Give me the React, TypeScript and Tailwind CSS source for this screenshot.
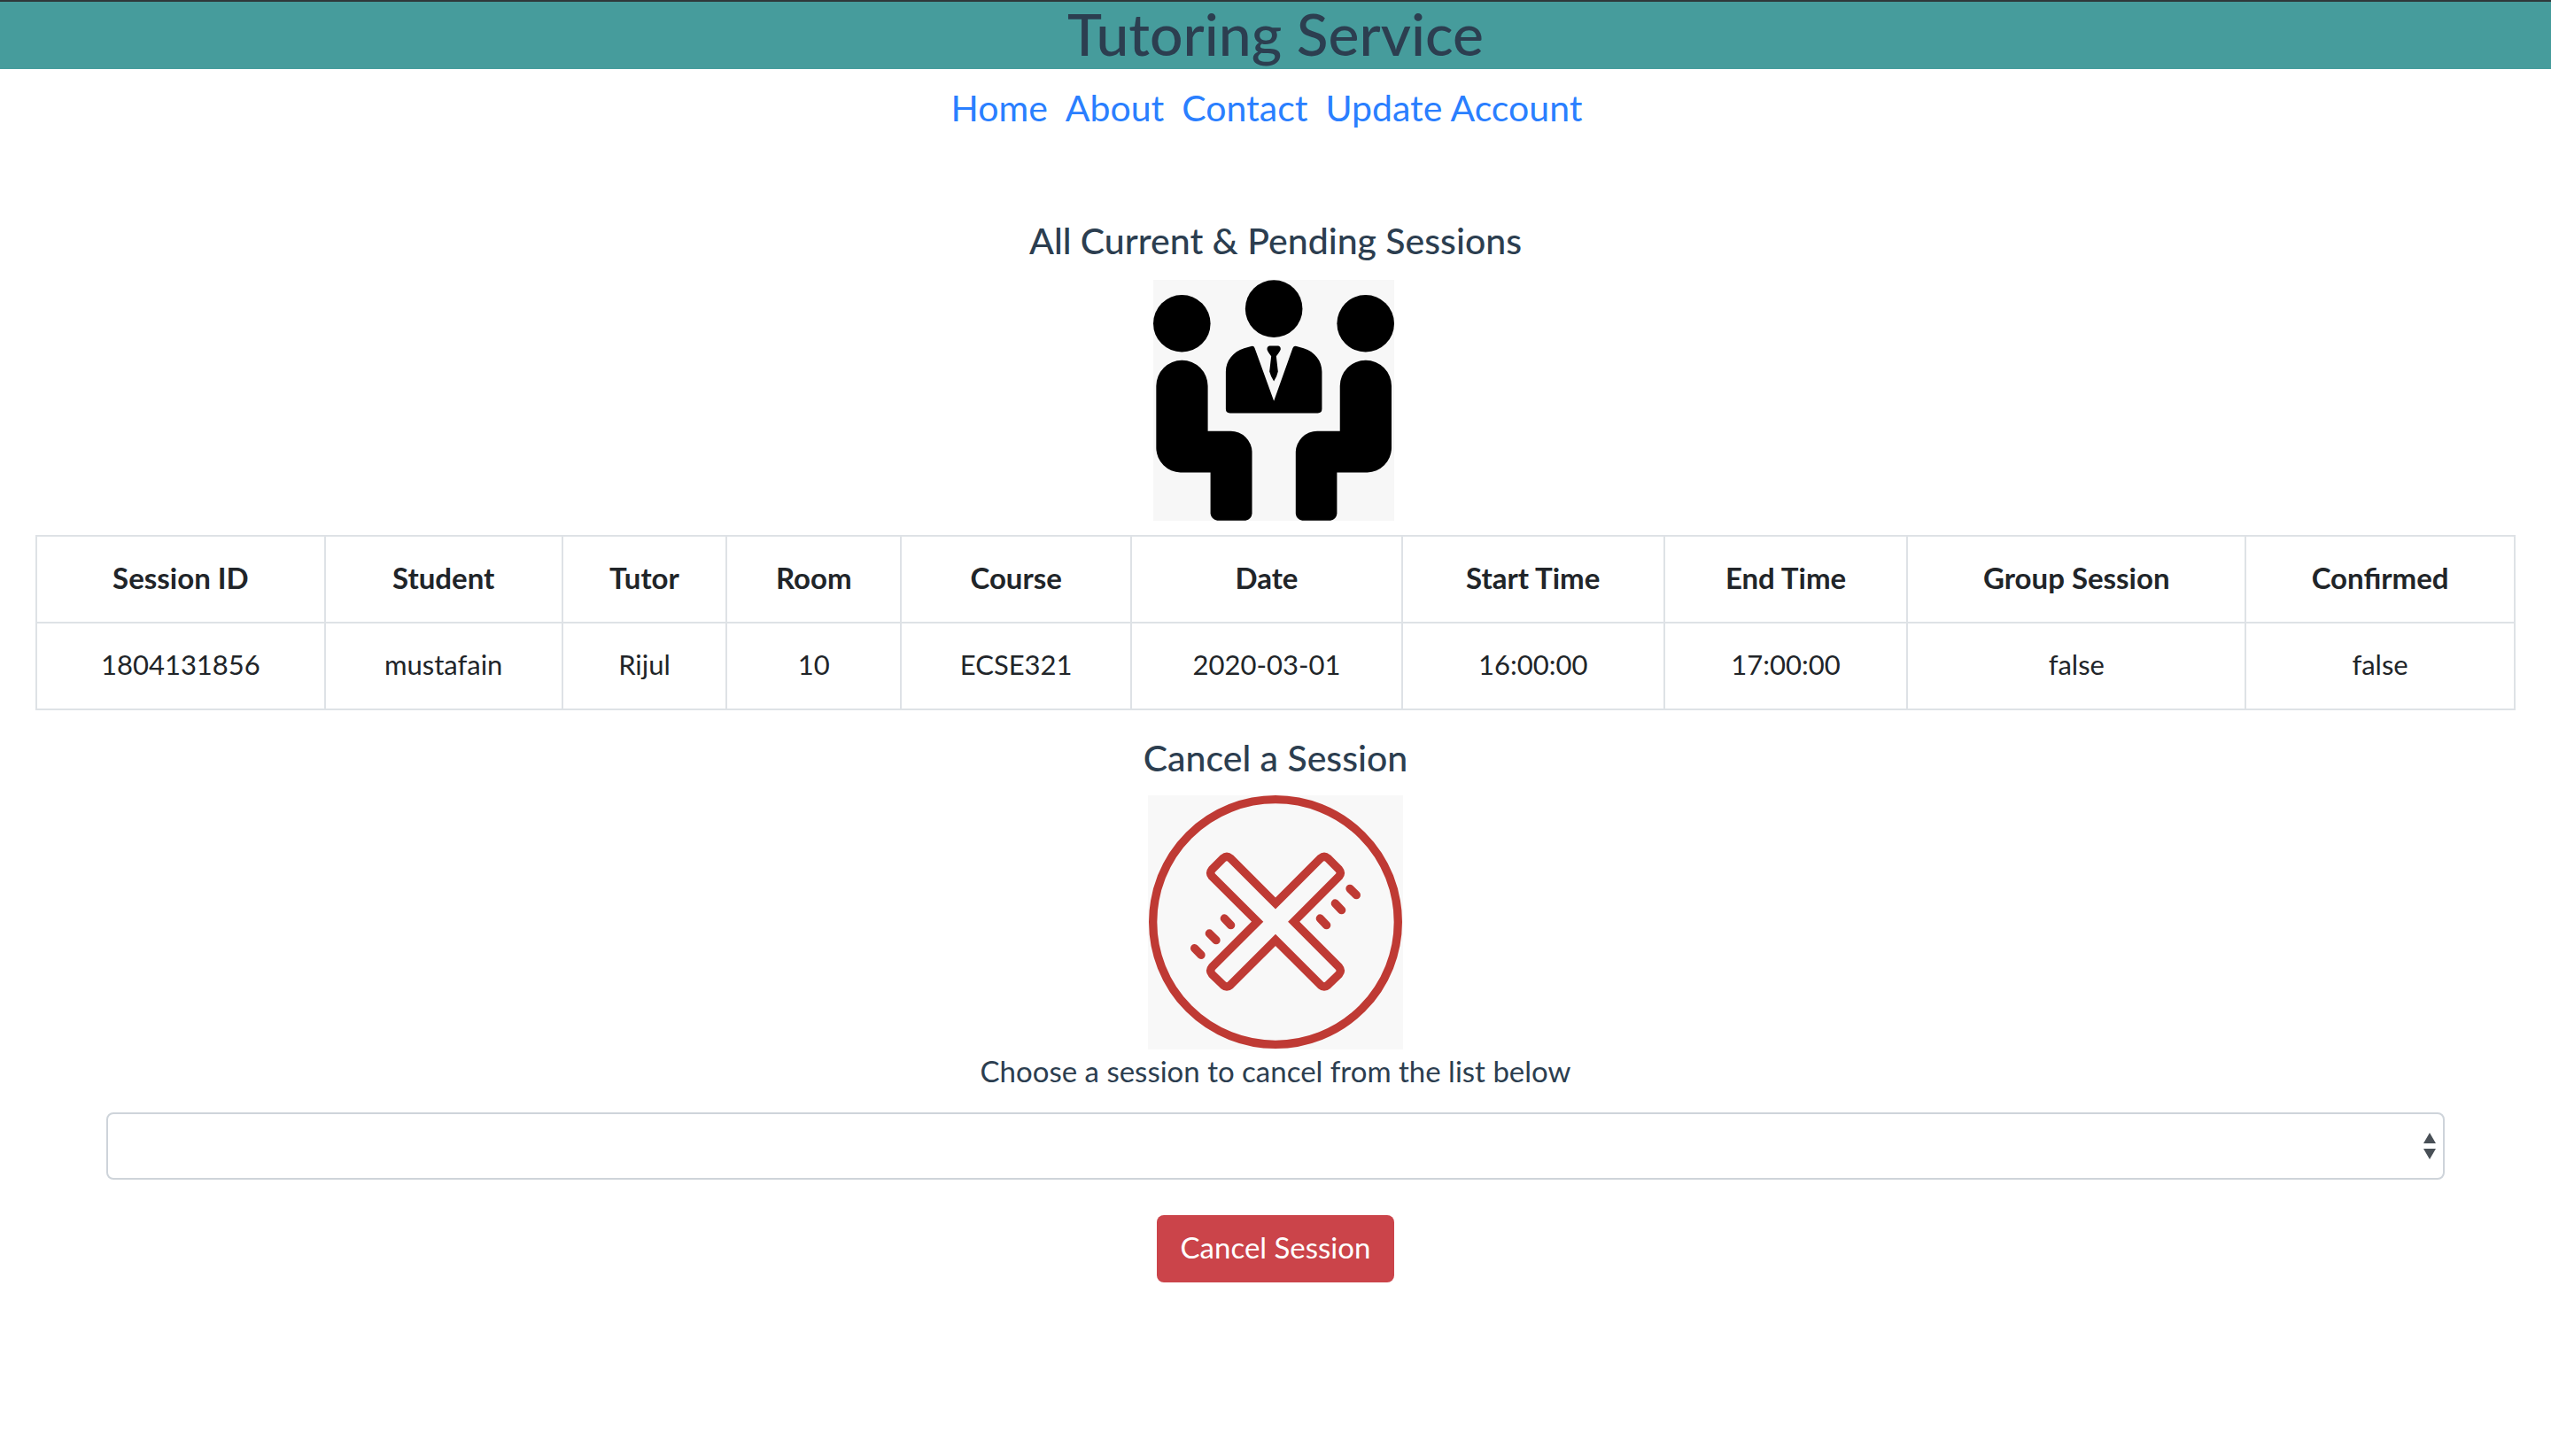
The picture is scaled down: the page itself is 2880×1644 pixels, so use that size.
const columns = [
  { label: "Session ID", value: "1804131856", width: "w-[326px]" },
  { label: "Student", value: "mustafain", width: "w-[268px]" },
  { label: "Tutor", value: "Rijul", width: "w-[186px]" },
  { label: "Room", value: "10", width: "w-[197px]" },
  { label: "Course", value: "ECSE321", width: "w-[260px]" },
  { label: "Date", value: "2020-03-01", width: "w-[306px]" },
  { label: "Start Time", value: "16:00:00", width: "w-[296px]" },
  { label: "End Time", value: "17:00:00", width: "w-[275px]" },
  { label: "Group Session", value: "false", width: "w-[382px]" },
  { label: "Confirmed", value: "false", width: "w-[304px]" },
];

const links = ["Home", "About", "Contact", "Update Account"];

function MeetingIcon() {
  return (
    <svg viewBox="0 0 817 817" className="mr-1 size-[272px] bg-[#f7f7f7]" aria-hidden="true">
      <circle cx="97" cy="148" r="97" />
      <circle cx="409" cy="98" r="97" />
      <circle cx="720" cy="148" r="97" />
      <path d="M10 360a87 87 0 0 1 175 0V513H262A72 72 0 0 1 335 585V793Q333 812 313 816H217Q197 812 194 793V653H92A84 84 0 0 1 10 571Z" />
      <path d="M808 360a87 87 0 0 0-175 0V513H556A73 73 0 0 0 483 585V793Q485 812 505 816H601Q621 812 623 793V653H726A84 84 0 0 0 808 571Z" />
      <path d="M332 225Q341 222 344 231L409 411L473 231Q477 222 486 225L510 232C548 244 572 275 572 312V438Q572 452 558 452H260Q246 452 246 438V312C246 275 270 244 308 232Z" />
      <path d="M394 224H424Q432 226 432 235Q432 240 417 259L423 311Q419 330 409 344Q399 330 394 311L400 259Q386 241 386 235Q386 226 394 224Z" />
    </svg>
  );
}

function CancelIcon() {
  return (
    <svg
      viewBox="0 0 864 861"
      className="h-[287px] w-[288px] bg-[#f8f8f8]"
      fill="none"
      stroke="#bf3a34"
      strokeWidth="28"
      aria-hidden="true"
    >
      <circle cx="432" cy="429" r="415" />
      <path d="M432 366L279 213Q267 203 255 213L217 251Q207 263 217 275L371 428L217 582Q207 594 217 606L255 643Q267 653 279 643L432 490L585 643Q597 653 609 643L647 606Q657 594 647 582L494 428L647 275Q657 263 647 251L609 213Q597 203 585 213Z" />
      <path
        d="M259 417L281 440M208 468L231 491M158 518L180 541M583 417L605 440M634 366L656 389M684 316L706 338"
        strokeLinecap="round"
      />
    </svg>
  );
}

export default function App() {
  return (
    <div className="bg-white text-center font-[Lato,'Open_Sans',sans-serif] text-[33px] leading-[48px] text-[#2c3e50]">
      <header className="border-t-2 border-[#2f383a] bg-[#469c9c] pb-1">
        <h1 className="text-[66px] leading-[72px] font-medium">Tutoring Service</h1>
      </header>

      <nav className="flex justify-center gap-5 pt-3.5 pr-5 text-[41px] leading-[60px]">
        {links.map((label) => (
          <a key={label} href="#" className="text-[#2a7fff]">
            {label}
          </a>
        ))}
      </nav>

      <main>
        <section className="flex flex-col items-center px-10 pt-24">
          <h2 className="mb-5 text-[41px] leading-[48px] font-medium">All Current &amp; Pending Sessions</h2>
          <MeetingIcon />
          <table className="mt-4 w-full border-collapse text-[#212529]">
            <thead>
              <tr>
                {columns.map((c) => (
                  <th
                    key={c.label}
                    scope="col"
                    className={`${c.width} border-2 border-[#dee2e6] pt-[22px] pb-[26px] font-bold whitespace-nowrap`}
                  >
                    {c.label}
                  </th>
                ))}
              </tr>
            </thead>
            <tbody className="text-[31px]">
              <tr>
                {columns.map((c) => (
                  <td key={c.label} className="border-2 border-[#dee2e6] pt-[22px] pb-[26px] whitespace-nowrap">
                    {c.value}
                  </td>
                ))}
              </tr>
            </tbody>
          </table>
        </section>

        <form className="flex flex-col items-center px-[120px] pt-[30px] pb-10" onSubmit={(e) => e.preventDefault()}>
          <h2 className="mb-[18px] text-[41px] leading-[48px] font-medium">Cancel a Session</h2>
          <CancelIcon />
          <label htmlFor="session">Choose a session to cancel from the list below</label>
          <div className="relative mt-[23px] w-full">
            <select
              id="session"
              defaultValue=""
              className="block h-[76px] w-full appearance-none rounded-lg border-2 border-[#ced4da] bg-white px-6"
            >
              <option value=""></option>
              <option value="1804131856">1804131856</option>
            </select>
            <svg
              viewBox="0 0 14 30"
              className="pointer-events-none absolute top-[23px] right-[10px] h-[30px] w-[14px]"
              fill="#495057"
              aria-hidden="true"
            >
              <path d="M7 0L14 12H0ZM0 18H14L7 30Z" />
            </svg>
          </div>
          <button type="submit" className="mt-10 h-[76px] rounded-lg bg-[#cb444a] px-[27px] pb-1 text-white">
            Cancel Session
          </button>
        </form>
      </main>
    </div>
  );
}
